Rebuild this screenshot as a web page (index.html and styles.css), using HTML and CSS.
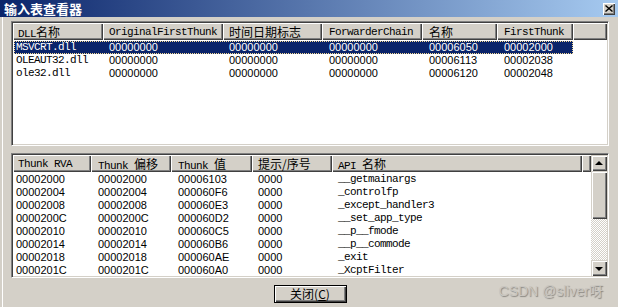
FILE: index.html
```html
<!DOCTYPE html>
<html lang="zh-CN">
<head>
<meta charset="utf-8">
<title>输入表查看器</title>
<link rel="stylesheet" href="styles.css">
</head>
<body>
<div class="window">
  <div class="titlebar">
    <span class="title">输入表查看器</span>
    <span class="tb-close"><svg width="8" height="7" viewBox="0 0 8 7"><path d="M0.5 0.5L7.5 6.5M7.5 0.5L0.5 6.5" stroke="#000" stroke-width="1.4" fill="none"/></svg></span>
  </div>
  <div class="content">
    <div class="list list-top">
      <div class="hdr">
        <div class="h t1"><span class="m">DLL</span><span class="cj">名称</span></div>
        <div class="h t2"><span class="m">OriginalFirstThunk</span></div>
        <div class="h t3"><span class="cj">时间日期标志</span></div>
        <div class="h t4"><span class="m">ForwarderChain</span></div>
        <div class="h t5"><span class="cj">名称</span></div>
        <div class="h t6"><span class="m">FirstThunk</span></div>
        <div class="h fill"></div>
      </div>
      <div class="rows">
        <div class="row sel"><span class="t1 m">MSVCRT.dll</span><span class="t2">00000000</span><span class="t3">00000000</span><span class="t4">00000000</span><span class="t5">00006050</span><span class="t6">00002000</span></div>
        <div class="row"><span class="t1 m">OLEAUT32.dll</span><span class="t2">00000000</span><span class="t3">00000000</span><span class="t4">00000000</span><span class="t5">00006113</span><span class="t6">00002038</span></div>
        <div class="row"><span class="t1 m">ole32.dll</span><span class="t2">00000000</span><span class="t3">00000000</span><span class="t4">00000000</span><span class="t5">00006120</span><span class="t6">00002048</span></div>
      </div>
    </div>

    <div class="list list-bottom">
      <div class="lv">
        <div class="hdr">
          <div class="h b1"><span class="m">Thunk RVA</span></div>
          <div class="h b2"><span class="m">Thunk </span><span class="cj">偏移</span></div>
          <div class="h b3"><span class="m">Thunk </span><span class="cj">值</span></div>
          <div class="h b4"><span class="cj">提示/序号</span></div>
          <div class="h b5"><span class="m">API </span><span class="cj">名称</span></div>
          <div class="h fill"></div>
        </div>
        <div class="rows">
          <div class="row"><span class="b1">00002000</span><span class="b2">00002000</span><span class="b3">00006103</span><span class="b4">0000</span><span class="b5 m">__getmainargs</span></div>
          <div class="row"><span class="b1">00002004</span><span class="b2">00002004</span><span class="b3">000060F6</span><span class="b4">0000</span><span class="b5 m">_controlfp</span></div>
          <div class="row"><span class="b1">00002008</span><span class="b2">00002008</span><span class="b3">000060E3</span><span class="b4">0000</span><span class="b5 m">_except_handler3</span></div>
          <div class="row"><span class="b1">0000200C</span><span class="b2">0000200C</span><span class="b3">000060D2</span><span class="b4">0000</span><span class="b5 m">__set_app_type</span></div>
          <div class="row"><span class="b1">00002010</span><span class="b2">00002010</span><span class="b3">000060C5</span><span class="b4">0000</span><span class="b5 m">__p__fmode</span></div>
          <div class="row"><span class="b1">00002014</span><span class="b2">00002014</span><span class="b3">000060B6</span><span class="b4">0000</span><span class="b5 m">__p__commode</span></div>
          <div class="row"><span class="b1">00002018</span><span class="b2">00002018</span><span class="b3">000060AE</span><span class="b4">0000</span><span class="b5 m">_exit</span></div>
          <div class="row"><span class="b1">0000201C</span><span class="b2">0000201C</span><span class="b3">000060A0</span><span class="b4">0000</span><span class="b5 m">_XcptFilter</span></div>
        </div>
      </div>
      <div class="sb">
        <div class="sb-btn"><span class="arr-up"></span></div>
        <div class="sb-thumb"></div>
        <div class="sb-track"></div>
        <div class="sb-btn"><span class="arr-down"></span></div>
      </div>
    </div>

    <div class="footer">
      <button class="btn">关闭(<u>C</u>)</button>
    </div>
  </div>
  <div class="watermark">CSDN @sliver呀</div>
</div>
</body>
</html>
```

FILE: styles.css
```css
* { box-sizing: border-box; margin: 0; padding: 0; }
html, body { width: 618px; height: 307px; overflow: hidden; }
body {
  background: #d4d0c8;
  font-family: "Liberation Sans", Arial, sans-serif;
  font-size: 11px;
  color: #000;
}
.window { position: relative; height: 307px; display: flex; flex-direction: column; }

.titlebar {
  height: 17px;
  flex: none;
  background: linear-gradient(to right, #0a246a, #a6caf0);
  display: flex;
  align-items: center;
  justify-content: space-between;
  padding: 0 3px 0 4px;
}
.title {
  color: #fff;
  font-family: "Noto Sans CJK SC", sans-serif;
  font-weight: bold;
  font-size: 13px;
  line-height: 17px;
}
.tb-close {
  width: 12px;
  height: 12px;
  background: #d4d0c8;
  box-shadow: inset 1px 1px #fff, inset -1px -1px #404040, inset -2px -2px #808080;
  display: flex;
  align-items: center;
  justify-content: center;
}
.tb-close svg { display: block; }

.content {
  flex: 1;
  margin-left: 2px;
  border-left: 1px solid #fff;
  padding: 4px 9px 0 8px;
  display: flex;
  flex-direction: column;
}

.list {
  height: 125px;
  flex: none;
  background: #fff;
  border: 1px solid;
  border-color: #808080 #fff #fff #808080;
  box-shadow: inset 1px 1px #404040, inset -1px -1px #d4d0c8;
  padding: 1px;
}
.list-bottom { margin-top: 7px; display: flex; }
.lv { flex: 1; min-width: 0; }

.m {
  font-family: "Liberation Mono", "Courier New", monospace;
  font-size: 11px;
  letter-spacing: -0.6px;
}
.cj { font-family: "Noto Sans CJK SC", sans-serif; font-size: 12px; }

.hdr { display: flex; height: 17px; }
.h {
  flex: none;
  height: 17px;
  line-height: 17px;
  background: #d4d0c8;
  box-shadow: inset 1px 1px #fff, inset -1px -1px #404040, inset -2px -2px #808080;
  white-space: nowrap;
  overflow: hidden;
}
.h.fill { flex: 1; }

.rows { padding-top: 1px; }
.row { display: flex; height: 13px; line-height: 13px; white-space: nowrap; }
.row > span { flex: none; overflow: hidden; }

/* top list columns */
.t1 { width: 90px; padding-left: 5px; }
.t2 { width: 120px; padding-left: 6px; }
.t3 { width: 99px; padding-left: 6px; }
.t4 { width: 100px; padding-left: 7px; }
.t5 { width: 75px; padding-left: 7px; }
.t6 { width: 76px; padding-left: 7px; }
.list-top .row { margin-left: 1px; width: 559px; }
.list-top .row .t1 { width: 89px; padding-left: 2px; }
.row.sel {
  background: #0a246a;
  color: #fff;
  outline: 1px dotted #f5db95;
  outline-offset: -1px;
}

/* bottom list columns */
.b1 { width: 78px; padding-left: 5px; }
.b2 { width: 80px; padding-left: 7px; }
.b3 { width: 81px; padding-left: 7px; }
.b4 { width: 80px; padding-left: 6px; }
.b5 { width: 250px; padding-left: 6px; }
.list-bottom .row .b1 { padding-left: 3px; }

/* scrollbar */
.sb { width: 16px; flex: none; display: flex; flex-direction: column; }
.sb-btn, .sb-thumb {
  background: #d4d0c8;
  box-shadow: inset 1px 1px #d4d0c8, inset 2px 2px #fff, inset -1px -1px #404040, inset -2px -2px #808080;
}
.sb-btn { height: 16px; flex: none; display: flex; align-items: center; justify-content: center; }
.sb-thumb { height: 48px; flex: none; }
.sb-track {
  flex: 1;
  background: repeating-conic-gradient(#d4d0c8 0 25%, #fff 0 50%) 0 0 / 2px 2px;
}
.arr-up, .arr-down { width: 0; height: 0; border-left: 4px solid transparent; border-right: 4px solid transparent; }
.arr-up { border-bottom: 4px solid #000; margin-top: -1px; }
.arr-down { border-top: 4px solid #000; margin-top: 1px; }

/* footer */
.footer { margin-top: 7px; display: flex; justify-content: center; }
.btn {
  width: 73px;
  height: 18px;
  background: #d4d0c8;
  border: 1px solid #000;
  box-shadow: inset 1px 1px #fff, inset -1px -1px #404040, inset -2px -2px #808080;
  font-family: "Noto Sans CJK SC", sans-serif;
  font-size: 12px;
  line-height: 14px;
  color: #000;
}
.btn u { text-decoration: underline; }

.watermark {
  position: absolute;
  right: 15px;
  top: 283px;
  font-family: "Liberation Sans", "Noto Sans CJK SC", sans-serif;
  font-size: 14px;
  line-height: 16px;
  color: #c9c6c0;
  text-shadow: 1px 1px 1px rgba(0, 0, 0, 0.35);
}
```
